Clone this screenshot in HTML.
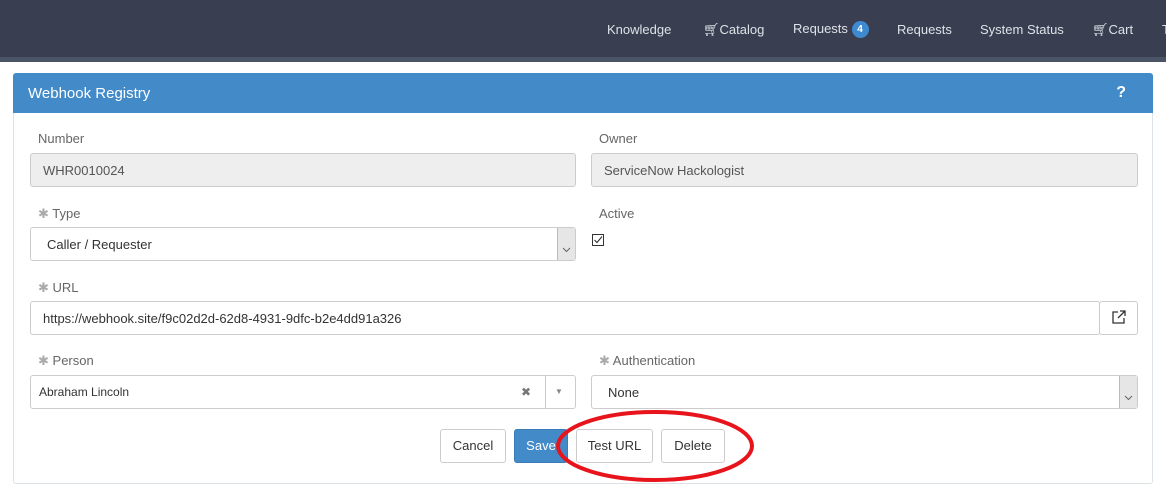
<!DOCTYPE html>
<html><head><style>
*{box-sizing:border-box;margin:0;padding:0}
body{width:1166px;height:500px;background:#fff;font-family:"Liberation Sans",sans-serif;font-size:13px;color:#333;position:relative;overflow:hidden}
.nav{position:absolute;left:0;top:0;width:1166px;height:57px;background:#393e51}
.strip{position:absolute;left:0;top:57px;width:1166px;height:5px;background:#4a5466}
.ni{position:absolute;top:22px;color:#dfe2e8;font-size:13px}
.badge{display:inline-block;width:17px;height:17px;border-radius:50%;background:#3e8ad0;color:#fff;font-size:10px;font-weight:bold;text-align:center;line-height:17px;vertical-align:middle}
.panel{position:absolute;left:13px;top:73px;width:1140px;height:411px;border:1px solid #dde2e6;border-radius:3px}
.ph{position:absolute;left:13px;top:73px;width:1140px;height:40px;background:#428ac8;border-radius:3px 3px 0 0;color:#fff;font-size:15px;padding:12px 0 0 15px}
.lbl{position:absolute;color:#666;font-size:13px}
.lbl b{color:#aaa;font-weight:normal}
.inp{position:absolute;height:34px;border:1px solid #ccc;border-radius:3px;padding:9px 12px;font-size:13px;color:#333;background:#fff}
.ro{background:#eee;color:#555}
.btn{position:absolute;top:429px;height:34px;border:1px solid #ccc;border-radius:3px;background:#fff;font-size:13px;text-align:center;line-height:32px;color:#333}
.caret{position:absolute;top:0;right:0;width:18px;height:32px;background:#e6e6e6;border-left:1px solid #bbb;padding:13px 0 0 4px}
</style></head><body>
<div class="nav"></div><div class="strip"></div>
<div class="ni" style="left:607px">Knowledge</div>
<div class="ni" style="left:703px">🛒︎Catalog</div>
<div class="ni" style="left:793px;top:21px">Requests <span class="badge">4</span></div>
<div class="ni" style="left:897px">Requests</div>
<div class="ni" style="left:980px">System Status</div>
<div class="ni" style="left:1092px">🛒︎Cart</div>
<div class="ni" style="left:1162px">T</div>
<div class="panel"></div>
<div class="ph">Webhook Registry<span style="position:absolute;right:27px;top:11px;font-weight:bold;font-size:16px">?</span></div>

<div class="lbl" style="left:38px;top:131px">Number</div>
<div class="inp ro" style="left:30px;top:153px;width:546px">WHR0010024</div>
<div class="lbl" style="left:599px;top:131px">Owner</div>
<div class="inp ro" style="left:591px;top:153px;width:547px">ServiceNow Hackologist</div>

<div class="lbl" style="left:38px;top:206px"><b>✱</b> Type</div>
<div class="inp" style="left:30px;top:227px;width:546px;padding-left:16px">Caller / Requester<div class="caret"><svg width="9" height="6" viewBox="0 0 9 6"><path d="M1 1l3.5 3.5L8 1" fill="none" stroke="#666"/></svg></div></div>
<div class="lbl" style="left:599px;top:206px">Active</div>
<div style="position:absolute;left:592px;top:234px;width:12px;height:12px;border:1px solid #333"><svg width="10" height="10" viewBox="0 0 10 10" style="position:absolute;left:0;top:0"><path d="M1.5 5l2.5 2.5L9 1.5" fill="none" stroke="#333" stroke-width="1.1"/></svg></div>

<div class="lbl" style="left:38px;top:280px"><b>✱</b> URL</div>
<div class="inp" style="left:30px;top:301px;width:1070px">https://webhook.site/f9c02d2d-62d8-4931-9dfc-b2e4dd91a326</div>
<div class="inp" style="left:1099px;top:301px;width:39px;padding:8px 0;text-align:center">
<svg width="14" height="14" viewBox="0 0 14 14" fill="none" stroke="#333" stroke-width="1.3"><path d="M6 2H1v11h11V8M8 1h5v5M13 1L6 8"/></svg></div>

<div class="lbl" style="left:38px;top:353px"><b>✱</b> Person</div>
<div class="inp" style="left:30px;top:375px;width:546px;padding-left:8px;font-size:12px">Abraham Lincoln
<span style="position:absolute;left:490px;top:9px;color:#777">✖</span>
<span style="position:absolute;left:514px;top:0;height:32px;border-left:1px solid #ccc"></span>
<span style="position:absolute;left:524px;top:11px;color:#888;font-size:8px">▼</span></div>
<div class="lbl" style="left:599px;top:353px"><b>✱</b> Authentication</div>
<div class="inp" style="left:591px;top:375px;width:547px;padding-left:16px">None<div class="caret"><svg width="9" height="6" viewBox="0 0 9 6"><path d="M1 1l3.5 3.5L8 1" fill="none" stroke="#666"/></svg></div></div>

<div class="btn" style="left:440px;width:66px">Cancel</div>
<div class="btn" style="left:514px;width:54px;background:#428ac8;border-color:#3a7cb6;color:#fff">Save</div>
<div class="btn" style="left:576px;width:77px">Test URL</div>
<div class="btn" style="left:661px;width:64px">Delete</div>
<svg style="position:absolute;left:0;top:0" width="1166" height="500"><ellipse cx="655" cy="446" rx="97" ry="34" fill="none" stroke="#e8141c" stroke-width="4"/></svg>
</body></html>
